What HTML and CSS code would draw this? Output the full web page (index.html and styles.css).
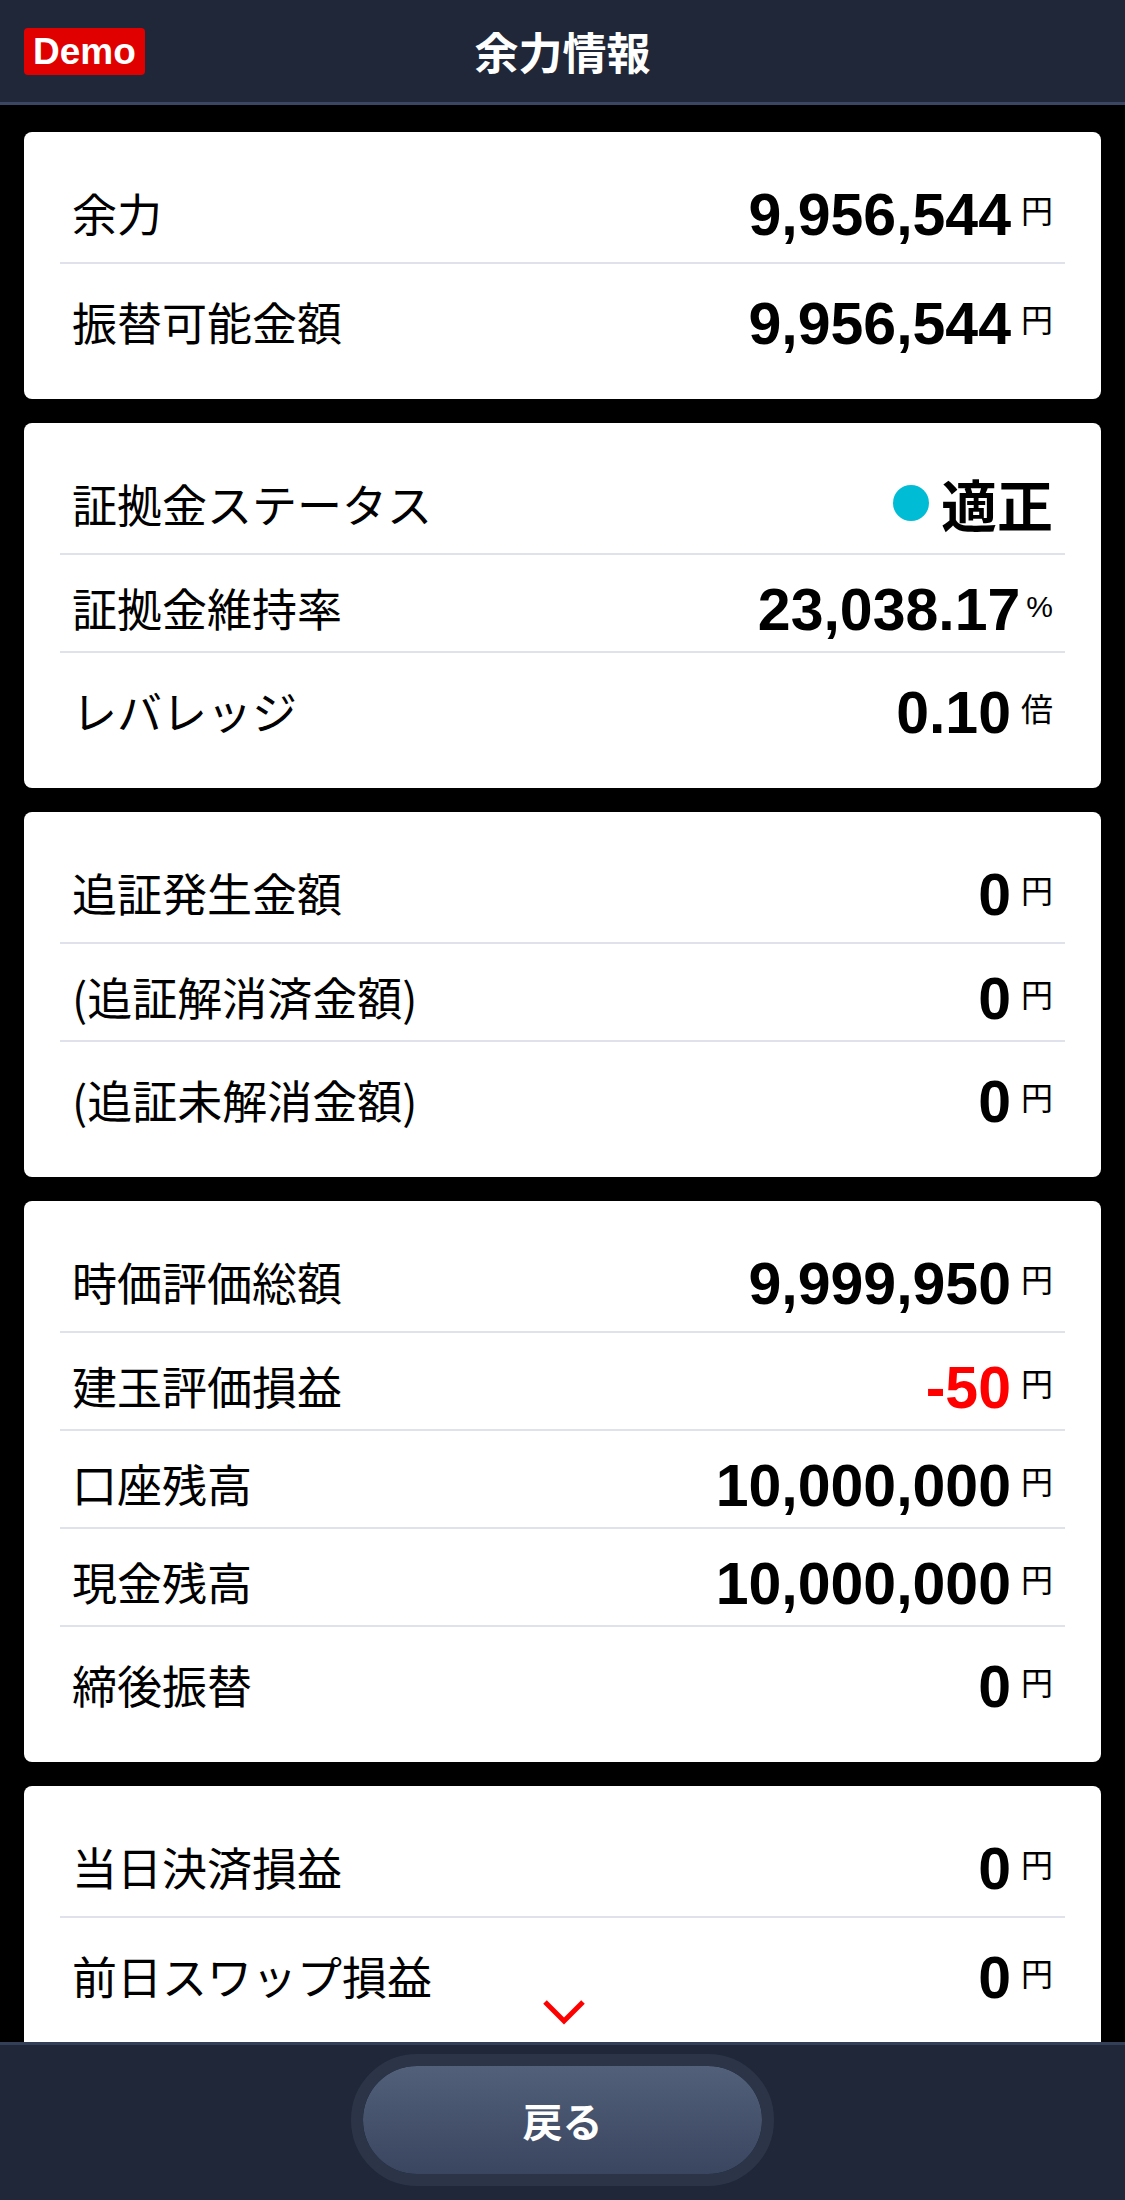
FILE: index.html
```html
<!DOCTYPE html>
<html lang="ja">
  <head>
    <meta charset="utf-8">
    <title>余力情報</title>
    <link rel="stylesheet" href="styles.css">
  </head>
  <body>
    <header class="topbar">
      <span class="demo">Demo</span>
      <h1 class="title">余力情報</h1>
      <span></span>
    </header>

    <main class="content">
      <section class="card">
        <div class="row">
          <span class="label">余力</span>
          <span class="value"><span class="num">9,956,544</span><span class="unit">円</span></span>
        </div>
        <div class="row">
          <span class="label">振替可能金額</span>
          <span class="value"><span class="num">9,956,544</span><span class="unit">円</span></span>
        </div>
      </section>

      <section class="card">
        <div class="row">
          <span class="label">証拠金ステータス</span>
          <span class="status"><span class="dot"></span>適正</span>
        </div>
        <div class="row">
          <span class="label">証拠金維持率</span>
          <span class="value"><span class="num">23,038.17</span><span class="unit pct">%</span></span>
        </div>
        <div class="row">
          <span class="label">レバレッジ</span>
          <span class="value"><span class="num">0.10</span><span class="unit">倍</span></span>
        </div>
      </section>

      <section class="card">
        <div class="row">
          <span class="label">追証発生金額</span>
          <span class="value"><span class="num">0</span><span class="unit">円</span></span>
        </div>
        <div class="row">
          <span class="label">(追証解消済金額)</span>
          <span class="value"><span class="num">0</span><span class="unit">円</span></span>
        </div>
        <div class="row">
          <span class="label">(追証未解消金額)</span>
          <span class="value"><span class="num">0</span><span class="unit">円</span></span>
        </div>
      </section>

      <section class="card">
        <div class="row">
          <span class="label">時価評価総額</span>
          <span class="value"><span class="num">9,999,950</span><span class="unit">円</span></span>
        </div>
        <div class="row">
          <span class="label">建玉評価損益</span>
          <span class="value"><span class="num neg">-50</span><span class="unit">円</span></span>
        </div>
        <div class="row">
          <span class="label">口座残高</span>
          <span class="value"><span class="num">10,000,000</span><span class="unit">円</span></span>
        </div>
        <div class="row">
          <span class="label">現金残高</span>
          <span class="value"><span class="num">10,000,000</span><span class="unit">円</span></span>
        </div>
        <div class="row">
          <span class="label">締後振替</span>
          <span class="value"><span class="num">0</span><span class="unit">円</span></span>
        </div>
      </section>

      <section class="card">
        <div class="row">
          <span class="label">当日決済損益</span>
          <span class="value"><span class="num">0</span><span class="unit">円</span></span>
        </div>
        <div class="row">
          <span class="label">前日スワップ損益</span>
          <span class="value"><span class="num">0</span><span class="unit">円</span></span>
        </div>
      </section>
    </main>

    <footer class="bottombar">
      <svg class="more" width="44" height="28" viewBox="0 0 44 28">
        <polyline points="3,3 22,22 41,3" fill="none" stroke="#ff0000" stroke-width="5"/>
      </svg>
      <button class="back">戻る</button>
    </footer>
  </body>
</html>
```

FILE: styles.css
```css
*{
    margin:0;
    padding:0;
    box-sizing:border-box;
}
body{
    background-color:#000;
    font-family:"Noto Sans CJK JP", sans-serif;
    color:#000;
}

/* top bar */
.topbar{
    display:grid;
    grid-template-columns:1fr auto 1fr;
    align-items:center;
    height:105px;
    padding:0 24px;
    background-color:#1f2739;
    border-bottom:3px solid #3b4762;
}
.demo{
    justify-self:start;
    padding:0 9px;
    background-color:#e00000;
    border-radius:4px;
    color:#fff;
    font:bold 37px/47px "Liberation Sans", sans-serif;
}
.title{
    color:#fff;
    font-size:44px;
    font-weight:700;
    line-height:1;
}

/* cards */
.content{
    display:flex;
    flex-direction:column;
    gap:24px;
    padding:27px 24px 200px;
}
.card{
    padding:24px 36px;
    background-color:#fff;
    border-radius:8px;
}
.row{
    display:flex;
    justify-content:space-between;
    align-items:center;
    height:98px;
    padding:8px 12px 0;
    border-bottom:2px solid #dfe2ea;
}
.row:first-child{
    height:108px;
    padding-top:6px;
}
.row:last-child{
    height:111px;
    padding-top:4px;
    border-bottom:none;
}
.label{
    font-size:45px;
    line-height:1;
}
.value{
    display:flex;
    align-items:flex-start;
    padding-top:6px;
}
.num{
    font:bold 59px/1 "Liberation Sans", sans-serif;
}
.neg{
    color:#f00;
}
.unit{
    margin:7px 0 0 10px;
    font-size:32px;
    line-height:1;
}
.unit.pct{
    margin:11px 0 0 6px;
    font-family:"Liberation Sans", sans-serif;
    font-size:30px;
}
.status{
    display:flex;
    align-items:center;
    gap:12px;
    font-size:56px;
    font-weight:700;
    line-height:1;
}
.dot{
    width:36px;
    height:36px;
    border-radius:50%;
    background-color:#00bcd4;
}

/* bottom bar */
.bottombar{
    position:fixed;
    left:0;
    right:0;
    bottom:0;
    display:flex;
    justify-content:center;
    height:158px;
    padding-top:9px;
    background-color:#1f2739;
    border-top:3px solid #333e57;
}
.more{
    position:absolute;
    top:-46px;
    left:50%;
    margin-left:-21px;
}
.back{
    width:423px;
    height:132px;
    border:12px solid #2c3548;
    border-radius:66px;
    background:linear-gradient(#526079, #3a4560);
    background-clip:padding-box;
    color:#fff;
    font-family:"Noto Sans CJK JP", sans-serif;
    font-size:40px;
    font-weight:700;
}
```
